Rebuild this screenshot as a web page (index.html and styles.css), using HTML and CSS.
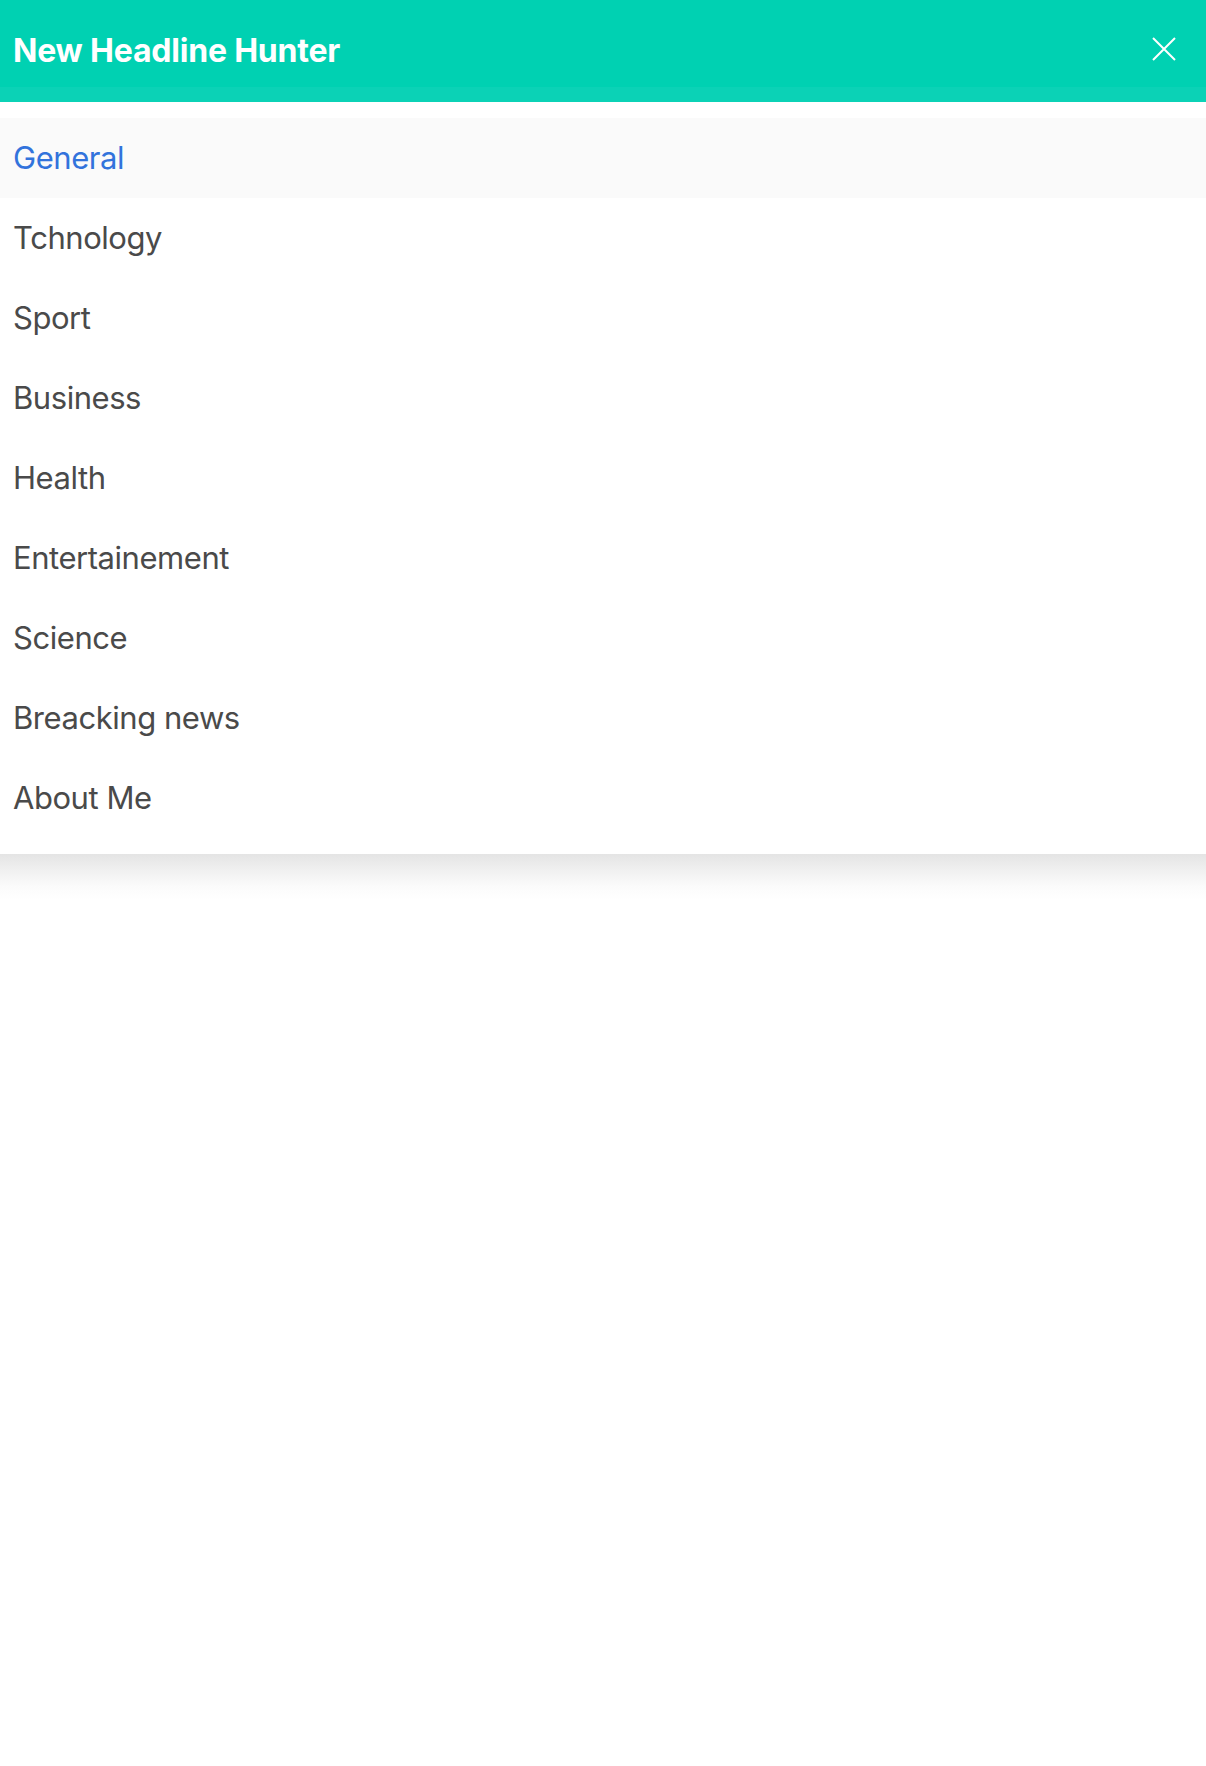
FILE: index.html
```html
<!DOCTYPE html>
<html lang="en">
<head>
<meta charset="utf-8">
<title>New Headline Hunter</title>
<link rel="stylesheet" href="styles.css">
</head>
<body>
<header class="navbar">
  <div class="brand">New Headline Hunter</div>
  <button class="close" aria-label="Close menu">
    <svg width="24" height="24" viewBox="0 0 24 24"><path d="M1 1 L23 23 M23 1 L1 23" stroke="#fff" stroke-width="2" fill="none"/></svg>
  </button>
</header>
<nav class="menu">
  <a class="item active" href="#">General</a>
  <a class="item" href="#">Tchnology</a>
  <a class="item" href="#">Sport</a>
  <a class="item" href="#">Business</a>
  <a class="item" href="#">Health</a>
  <a class="item" href="#">Entertainement</a>
  <a class="item" href="#">Science</a>
  <a class="item" href="#">Breacking news</a>
  <a class="item" href="#">About Me</a>
</nav>
<div class="menu-shadow"></div>
</body>
</html>
```
FILE: styles.css
```css
html, body {
  margin: 0;
  padding: 0;
  background: #fff;
  font-family: Inter, "Noto Sans", "Liberation Sans", sans-serif;
}
.navbar {
  box-sizing: content-box;
  height: 73px;
  padding: 14px 30px 0 13px;
  border-bottom: 15px solid #0bd2b6;
  background: #00d1b2;
  display: flex;
  align-items: center;
  justify-content: space-between;
}
.brand {
  color: #fff;
  font-weight: 700;
  font-size: 32px;
  letter-spacing: -0.2px;
}
.close {
  background: none;
  border: 0;
  padding: 0;
  width: 24px;
  height: 24px;
  display: flex;
  margin-top: -4px;
}
.menu {
  padding: 16px 0;
  background: #fff;
  display: flex;
  flex-direction: column;
}
.menu-shadow {
  height: 46px;
  background-color: #fff;
  background-image: linear-gradient(to bottom, #e4e4e4 0%, #f0f0f0 35%, #fbfbfb 70%, #ffffff 100%);
}
.item {
  display: block;
  padding: 16px 13px;
  font-size: 31px;
  line-height: 48px;
  letter-spacing: -0.45px;
  color: #4a4a4a;
  text-decoration: none;
}
.item.active {
  background: #fafafa;
  color: #3273dc;
}
```
